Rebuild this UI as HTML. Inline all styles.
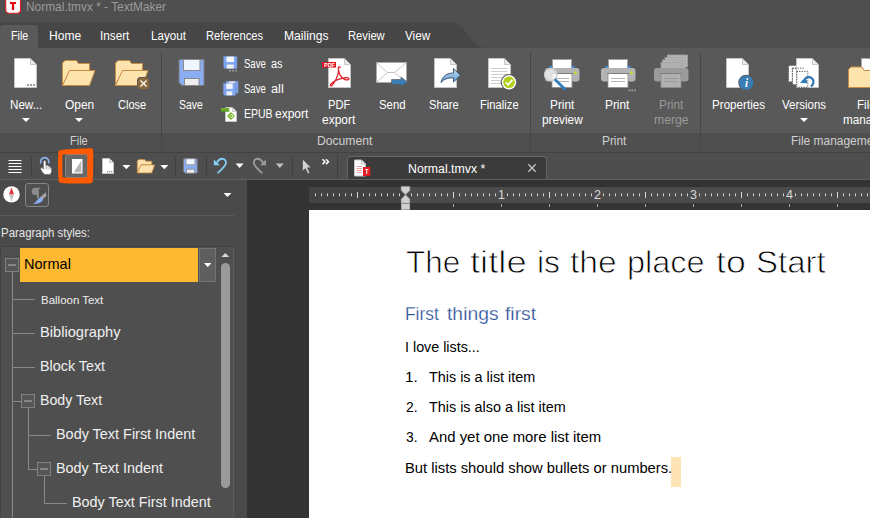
<!DOCTYPE html>
<html><head><meta charset="utf-8"><title>Normal.tmvx * - TextMaker</title>
<style>
html,body{margin:0;padding:0}
body{width:870px;height:518px;overflow:hidden;position:relative;background:#4a4a4a;font-family:'Liberation Sans', sans-serif;}
span{-webkit-font-smoothing:antialiased}
</style></head><body>
<div style="position:absolute;left:0px;top:0px;width:870px;height:22px;background:#4f4f4f;"></div>
<div style="position:absolute;left:0px;top:22px;width:870px;height:26px;background:#4f4f4f;"></div>
<svg style="position:absolute;left:0px;top:22px;" width="500" height="26" viewBox="0 0 500 26"><path d="M0 0 H450 C468 0 468 26 488 26 H0 Z" fill="#464646"/></svg>
<div style="position:absolute;left:0px;top:25px;width:38px;height:23px;background:#595959;border-radius:3px 3px 0 0;"></div>
<div style="position:absolute;left:0px;top:48px;width:870px;height:85px;background:#595959;"></div>
<div style="position:absolute;left:0px;top:133px;width:870px;height:19px;background:#4f4f4f;"></div>
<div style="position:absolute;left:0px;top:152px;width:870px;height:1px;background:#424242;"></div>
<div style="position:absolute;left:0px;top:153px;width:870px;height:26px;background:#4e4e4e;"></div>
<div style="position:absolute;left:0px;top:179px;width:870px;height:1px;background:#5e5e5e;"></div>
<div style="position:absolute;left:0px;top:180px;width:247px;height:338px;background:#4a4a4a;"></div>
<div style="position:absolute;left:247px;top:180px;width:623px;height:338px;background:#333333;"></div>
<div style="position:absolute;left:161px;top:52px;width:1px;height:100px;background:#474747;"></div>
<div style="position:absolute;left:530px;top:52px;width:1px;height:100px;background:#474747;"></div>
<div style="position:absolute;left:700px;top:52px;width:1px;height:100px;background:#474747;"></div>
<svg style="position:absolute;left:5px;top:0px;" width="17" height="15" viewBox="0 0 17 15"><rect x="0.7" y="-3" width="14.8" height="16.3" rx="3" fill="#fff" stroke="#e01b24" stroke-width="1.1"/><path d="M4.9 2.1h6.2v1.9h-1.95v5.9h-2.3v-5.9h-1.95z" fill="#e60012"/></svg>
<svg style="position:absolute;left:21.5px;top:118.2px;" width="8" height="4" viewBox="0 0 8 4"><path d="M0 0H8L4.0 4Z" fill="#fff"/></svg>
<svg style="position:absolute;left:74.5px;top:118.2px;" width="8" height="4" viewBox="0 0 8 4"><path d="M0 0H8L4.0 4Z" fill="#fff"/></svg>
<svg style="position:absolute;left:800.0px;top:118.2px;" width="8" height="4" viewBox="0 0 8 4"><path d="M0 0H8L4.0 4Z" fill="#fff"/></svg>
<div style="position:absolute;left:347px;top:156px;width:200px;height:23px;background:#666666;border-radius:4px 4px 0 0;"></div>
<div style="position:absolute;left:348px;top:157px;width:198px;height:22px;background:#3b3b3b;border-radius:3px 3px 0 0;"></div>
<div style="position:absolute;left:0px;top:179px;width:870px;height:1px;background:#5e5e5e;"></div>
<svg style="position:absolute;left:527px;top:163px;" width="10" height="10" viewBox="0 0 10 10"><path d="M1.3 1.3L8.7 8.7M8.7 1.3L1.3 8.7" stroke="#c4c4c4" stroke-width="1.3" fill="none"/></svg>
<div style="position:absolute;left:309px;top:187px;width:561px;height:16px;background:#424242;"></div>
<div style="position:absolute;left:405px;top:187px;width:465px;height:16px;background:#4b4b4b;"></div>
<svg style="position:absolute;left:309px;top:187px;" width="561" height="23" viewBox="0 0 561 23"><rect x="6.0" y="6.4" width="1" height="2.8" fill="#d0d0d0"/><rect x="12.0" y="6.4" width="1" height="2.8" fill="#d0d0d0"/><rect x="18.0" y="6.4" width="1" height="2.8" fill="#d0d0d0"/><rect x="24.0" y="6.4" width="1" height="2.8" fill="#d0d0d0"/><rect x="30.0" y="6.4" width="1" height="2.8" fill="#d0d0d0"/><rect x="36.0" y="6.4" width="1" height="2.8" fill="#d0d0d0"/><rect x="42.0" y="6.4" width="1" height="2.8" fill="#d0d0d0"/><rect x="48.0" y="5" width="1" height="6" fill="#d4d4d4"/><rect x="54.0" y="6.4" width="1" height="2.8" fill="#d0d0d0"/><rect x="60.0" y="6.4" width="1" height="2.8" fill="#d0d0d0"/><rect x="66.0" y="6.4" width="1" height="2.8" fill="#d0d0d0"/><rect x="72.0" y="6.4" width="1" height="2.8" fill="#d0d0d0"/><rect x="78.0" y="6.4" width="1" height="2.8" fill="#d0d0d0"/><rect x="84.0" y="6.4" width="1" height="2.8" fill="#d0d0d0"/><rect x="90.0" y="6.4" width="1" height="2.8" fill="#d0d0d0"/><rect x="102.0" y="6.4" width="1" height="2.8" fill="#d0d0d0"/><rect x="108.0" y="6.4" width="1" height="2.8" fill="#d0d0d0"/><rect x="114.0" y="6.4" width="1" height="2.8" fill="#d0d0d0"/><rect x="120.0" y="6.4" width="1" height="2.8" fill="#d0d0d0"/><rect x="126.0" y="6.4" width="1" height="2.8" fill="#d0d0d0"/><rect x="132.0" y="6.4" width="1" height="2.8" fill="#d0d0d0"/><rect x="138.0" y="6.4" width="1" height="2.8" fill="#d0d0d0"/><rect x="144.0" y="5" width="1" height="6" fill="#d4d4d4"/><rect x="150.0" y="6.4" width="1" height="2.8" fill="#d0d0d0"/><rect x="156.0" y="6.4" width="1" height="2.8" fill="#d0d0d0"/><rect x="162.0" y="6.4" width="1" height="2.8" fill="#d0d0d0"/><rect x="168.0" y="6.4" width="1" height="2.8" fill="#d0d0d0"/><rect x="174.0" y="6.4" width="1" height="2.8" fill="#d0d0d0"/><rect x="180.0" y="6.4" width="1" height="2.8" fill="#d0d0d0"/><rect x="186.0" y="6.4" width="1" height="2.8" fill="#d0d0d0"/><rect x="198.0" y="6.4" width="1" height="2.8" fill="#d0d0d0"/><rect x="204.0" y="6.4" width="1" height="2.8" fill="#d0d0d0"/><rect x="210.0" y="6.4" width="1" height="2.8" fill="#d0d0d0"/><rect x="216.0" y="6.4" width="1" height="2.8" fill="#d0d0d0"/><rect x="222.0" y="6.4" width="1" height="2.8" fill="#d0d0d0"/><rect x="228.0" y="6.4" width="1" height="2.8" fill="#d0d0d0"/><rect x="234.0" y="6.4" width="1" height="2.8" fill="#d0d0d0"/><rect x="240.0" y="5" width="1" height="6" fill="#d4d4d4"/><rect x="246.0" y="6.4" width="1" height="2.8" fill="#d0d0d0"/><rect x="252.0" y="6.4" width="1" height="2.8" fill="#d0d0d0"/><rect x="258.0" y="6.4" width="1" height="2.8" fill="#d0d0d0"/><rect x="264.0" y="6.4" width="1" height="2.8" fill="#d0d0d0"/><rect x="270.0" y="6.4" width="1" height="2.8" fill="#d0d0d0"/><rect x="276.0" y="6.4" width="1" height="2.8" fill="#d0d0d0"/><rect x="282.0" y="6.4" width="1" height="2.8" fill="#d0d0d0"/><rect x="294.0" y="6.4" width="1" height="2.8" fill="#d0d0d0"/><rect x="300.0" y="6.4" width="1" height="2.8" fill="#d0d0d0"/><rect x="306.0" y="6.4" width="1" height="2.8" fill="#d0d0d0"/><rect x="312.0" y="6.4" width="1" height="2.8" fill="#d0d0d0"/><rect x="318.0" y="6.4" width="1" height="2.8" fill="#d0d0d0"/><rect x="324.0" y="6.4" width="1" height="2.8" fill="#d0d0d0"/><rect x="330.0" y="6.4" width="1" height="2.8" fill="#d0d0d0"/><rect x="336.0" y="5" width="1" height="6" fill="#d4d4d4"/><rect x="342.0" y="6.4" width="1" height="2.8" fill="#d0d0d0"/><rect x="348.0" y="6.4" width="1" height="2.8" fill="#d0d0d0"/><rect x="354.0" y="6.4" width="1" height="2.8" fill="#d0d0d0"/><rect x="360.0" y="6.4" width="1" height="2.8" fill="#d0d0d0"/><rect x="366.0" y="6.4" width="1" height="2.8" fill="#d0d0d0"/><rect x="372.0" y="6.4" width="1" height="2.8" fill="#d0d0d0"/><rect x="378.0" y="6.4" width="1" height="2.8" fill="#d0d0d0"/><rect x="390.0" y="6.4" width="1" height="2.8" fill="#d0d0d0"/><rect x="396.0" y="6.4" width="1" height="2.8" fill="#d0d0d0"/><rect x="402.0" y="6.4" width="1" height="2.8" fill="#d0d0d0"/><rect x="408.0" y="6.4" width="1" height="2.8" fill="#d0d0d0"/><rect x="414.0" y="6.4" width="1" height="2.8" fill="#d0d0d0"/><rect x="420.0" y="6.4" width="1" height="2.8" fill="#d0d0d0"/><rect x="426.0" y="6.4" width="1" height="2.8" fill="#d0d0d0"/><rect x="432.0" y="5" width="1" height="6" fill="#d4d4d4"/><rect x="438.0" y="6.4" width="1" height="2.8" fill="#d0d0d0"/><rect x="444.0" y="6.4" width="1" height="2.8" fill="#d0d0d0"/><rect x="450.0" y="6.4" width="1" height="2.8" fill="#d0d0d0"/><rect x="456.0" y="6.4" width="1" height="2.8" fill="#d0d0d0"/><rect x="462.0" y="6.4" width="1" height="2.8" fill="#d0d0d0"/><rect x="468.0" y="6.4" width="1" height="2.8" fill="#d0d0d0"/><rect x="474.0" y="6.4" width="1" height="2.8" fill="#d0d0d0"/><rect x="486.0" y="6.4" width="1" height="2.8" fill="#d0d0d0"/><rect x="492.0" y="6.4" width="1" height="2.8" fill="#d0d0d0"/><rect x="498.0" y="6.4" width="1" height="2.8" fill="#d0d0d0"/><rect x="504.0" y="6.4" width="1" height="2.8" fill="#d0d0d0"/><rect x="510.0" y="6.4" width="1" height="2.8" fill="#d0d0d0"/><rect x="516.0" y="6.4" width="1" height="2.8" fill="#d0d0d0"/><rect x="522.0" y="6.4" width="1" height="2.8" fill="#d0d0d0"/><rect x="528.0" y="5" width="1" height="6" fill="#d4d4d4"/><rect x="534.0" y="6.4" width="1" height="2.8" fill="#d0d0d0"/><rect x="540.0" y="6.4" width="1" height="2.8" fill="#d0d0d0"/><rect x="546.0" y="6.4" width="1" height="2.8" fill="#d0d0d0"/><rect x="552.0" y="6.4" width="1" height="2.8" fill="#d0d0d0"/><rect x="558.0" y="6.4" width="1" height="2.8" fill="#d0d0d0"/><rect x="564.0" y="6.4" width="1" height="2.8" fill="#d0d0d0"/><rect x="570.0" y="6.4" width="1" height="2.8" fill="#d0d0d0"/><rect x="96.0" y="17" width="1" height="3" fill="#a8a8a8"/><rect x="144.0" y="17" width="1" height="3" fill="#a8a8a8"/><rect x="192.0" y="17" width="1" height="3" fill="#a8a8a8"/><rect x="240.0" y="17" width="1" height="3" fill="#a8a8a8"/><rect x="288.0" y="17" width="1" height="3" fill="#a8a8a8"/><rect x="336.0" y="17" width="1" height="3" fill="#a8a8a8"/><rect x="384.0" y="17" width="1" height="3" fill="#a8a8a8"/><rect x="432.0" y="17" width="1" height="3" fill="#a8a8a8"/><rect x="480.0" y="17" width="1" height="3" fill="#a8a8a8"/><rect x="528.0" y="17" width="1" height="3" fill="#a8a8a8"/></svg>
<svg style="position:absolute;left:0px;top:0px;" width="870" height="518" viewBox="0 0 870 518"><g fill="#d0d0d0" stroke="#a2a2a2" stroke-width="0.5"><path d="M401.2 186.4H409.8V190.5L405.5 194.8L401.2 190.5Z"/><path d="M405.5 194.8L409.8 199.2V203H401.2V199.2Z"/><rect x="401.2" y="203.7" width="8.6" height="6"/></g></svg>
<div style="position:absolute;left:309px;top:210px;width:561px;height:308px;background:#ffffff;"></div>
<div style="position:absolute;left:671px;top:457px;width:10px;height:29.5px;background:#fee3b4;"></div>
<div style="position:absolute;left:0px;top:215px;width:234px;height:1px;background:#5a5a5a;"></div>
<div style="position:absolute;left:0px;top:246px;width:234px;height:272px;background:#434343;"></div>
<div style="position:absolute;left:1px;top:247px;width:232px;height:271px;background:#4f4f4f;"></div>
<div style="position:absolute;left:233px;top:247px;width:1px;height:271px;background:#5c5c5c;"></div>
<div style="position:absolute;left:20px;top:248px;width:178px;height:34px;background:#fdb932;"></div>
<div style="position:absolute;left:199px;top:248px;width:17px;height:34px;background:#747474;"></div>
<div style="position:absolute;left:200px;top:249px;width:15px;height:32px;background:#5e5e5e;"></div>
<svg style="position:absolute;left:203.7px;top:262.95px;" width="7.6" height="4.1" viewBox="0 0 7.6 4.1"><path d="M0 0H7.6L3.8 4.1Z" fill="#fff"/></svg>
<svg style="position:absolute;left:221.2px;top:252.5px;" width="8.7" height="4.5" viewBox="0 0 8.7 4.5"><path d="M0 4.5L4.35 0L8.7 4.5Z" fill="#d8d8d8"/></svg>
<div style="position:absolute;left:221px;top:263px;width:9px;height:224.5px;background:#9a9a9a;border-radius:4.5px;"></div>
<div style="position:absolute;left:12px;top:272px;width:1px;height:246px;background:#8a8a8a;"></div>
<div style="position:absolute;left:12px;top:299px;width:23px;height:1px;background:#8a8a8a;"></div>
<div style="position:absolute;left:12px;top:333px;width:23px;height:1px;background:#8a8a8a;"></div>
<div style="position:absolute;left:12px;top:367px;width:23px;height:1px;background:#8a8a8a;"></div>
<div style="position:absolute;left:12px;top:401px;width:9px;height:1px;background:#8a8a8a;"></div>
<div style="position:absolute;left:28px;top:408px;width:1px;height:62px;background:#8a8a8a;"></div>
<div style="position:absolute;left:28px;top:435px;width:23px;height:1px;background:#8a8a8a;"></div>
<div style="position:absolute;left:28px;top:469px;width:9px;height:1px;background:#8a8a8a;"></div>
<div style="position:absolute;left:44px;top:476px;width:1px;height:28px;background:#8a8a8a;"></div>
<div style="position:absolute;left:44px;top:503px;width:23px;height:1px;background:#8a8a8a;"></div>
<div style="position:absolute;left:5px;top:258px;width:14px;height:14px;background:#808080;"></div>
<div style="position:absolute;left:6px;top:259px;width:12px;height:12px;background:#565656;"></div>
<div style="position:absolute;left:8px;top:263.5px;width:8px;height:2.5px;background:#858585;"></div>
<div style="position:absolute;left:21px;top:394px;width:14px;height:14px;background:#808080;"></div>
<div style="position:absolute;left:22px;top:395px;width:12px;height:12px;background:#565656;"></div>
<div style="position:absolute;left:24px;top:399.5px;width:8px;height:2.5px;background:#858585;"></div>
<div style="position:absolute;left:37px;top:462px;width:14px;height:14px;background:#808080;"></div>
<div style="position:absolute;left:38px;top:463px;width:12px;height:12px;background:#565656;"></div>
<div style="position:absolute;left:40px;top:467.5px;width:8px;height:2.5px;background:#858585;"></div>
<svg style="position:absolute;left:0;top:0" width="870" height="518" viewBox="0 0 870 518"><path d="M14.5 58.5H30.5L36.5 64.5V87.5H14.5Z" fill="#fff" stroke="#c4c4c4" stroke-width="1"/><path d="M30.5 58.5V64.5H36.5Z" fill="#ececec" stroke="#b4b4b4" stroke-width="0.7"/><g fill="#9a9a9a"><rect x="27" y="84" width="2" height="2"/><rect x="30" y="84" width="2" height="2"/><rect x="33" y="84" width="2" height="2"/></g><g transform="translate(62,60) scale(1.0)"><path d="M0.5 25.5V3L3 0.5H14.5L16.5 3.5H27.5V10.5H8Z" fill="#fde3ae" stroke="#c78b42" stroke-width="1.00" stroke-linejoin="round"/><path d="M0.5 25.5L7.5 10.5H33L27.5 25.5Z" fill="#fde3ae" stroke="#c78b42" stroke-width="1.00" stroke-linejoin="round"/></g><g transform="translate(115,60) scale(1.0)"><path d="M0.5 25.5V3L3 0.5H14.5L16.5 3.5H27.5V10.5H8Z" fill="#fde3ae" stroke="#c78b42" stroke-width="1.00" stroke-linejoin="round"/><path d="M0.5 25.5L7.5 10.5H33L27.5 25.5Z" fill="#fde3ae" stroke="#c78b42" stroke-width="1.00" stroke-linejoin="round"/></g><rect x="137.5" y="77.5" width="12" height="12" rx="2.5" fill="#8d6a3b" stroke="#595959" stroke-width="1"/><path d="M140.5 80.5L146.5 86.5M146.5 80.5L140.5 86.5" stroke="#fff" stroke-width="1.3" fill="none"/><g transform="translate(178.5,59) scale(1.0)"><path d="M0.5 0.5H25.5V26.5H3.5L0.5 23.5Z" fill="#8aadf4" stroke="#7a7a7a" stroke-width="1.00"/><rect x="5" y="0.5" width="16.5" height="11" fill="#f0f5ff" stroke="#8a8a8a" stroke-width="1.00"/><rect x="6" y="19.5" width="14.5" height="7" fill="#efefef" stroke="#8a8a8a" stroke-width="1.00"/></g><g transform="translate(223.5,56.3)"><path d="M0 0H13.5V12.5H1.6L0 10.9Z" fill="#7fa6f3" stroke="#6f7f9f" stroke-width="0.5"/><rect x="3" y="0.3" width="7.5" height="5.38" fill="#f4f7ff"/><rect x="3.4" y="8.25" width="6.7" height="3.95" fill="#f0f0f0"/></g><g fill="#9a9a9a"><rect x="229" y="70" width="2" height="1.5"/><rect x="232" y="70" width="2" height="1.5"/><rect x="235" y="70" width="2" height="1.5"/></g><g transform="translate(225.7,81.2)"><path d="M0 0H12.5V12H1.6L0 10.4Z" fill="#7fa6f3" stroke="#6f7f9f" stroke-width="0.5"/><rect x="3" y="0.3" width="6.5" height="5.16" fill="#f4f7ff"/><rect x="3.4" y="7.92" width="5.7" height="3.78" fill="#f0f0f0"/></g><g transform="translate(223.2,83.3)"><path d="M0 0H12.5V12.3H1.6L0 10.700000000000001Z" fill="#7fa6f3" stroke="#6f7f9f" stroke-width="0.5"/><rect x="3" y="0.3" width="6.5" height="5.29" fill="#f4f7ff"/><rect x="3.4" y="8.12" width="5.7" height="3.88" fill="#f0f0f0"/></g><path d="M225.5 107.5H232.5L236.5 111.5V121.5H225.5Z" fill="#fff" stroke="#c4c4c4" stroke-width="1"/><path d="M232.5 107.5V111.5H236.5Z" fill="#ececec" stroke="#b4b4b4" stroke-width="0.7"/><rect x="221" y="108" width="8.3" height="3.5" fill="#6fae2e"/><rect x="221" y="110.7" width="8.3" height="0.8" fill="#4f8d1f"/><path d="M231 112L235 116L231 120L227 116Z" fill="#7cb62f"/><path d="M229.5 116.5L231.5 114.5L233 116L231 118" stroke="#fff" stroke-width="0.9" fill="none"/><path d="M328.5 58.5H344.5L350.5 64.5V87.5H328.5Z" fill="#fff" stroke="#c4c4c4" stroke-width="1"/><path d="M344.5 58.5V64.5H350.5Z" fill="#ececec" stroke="#b4b4b4" stroke-width="0.7"/><rect x="322" y="62" width="14" height="5.5" fill="#e0111b"/><path transform="translate(0,1.3)" d="M340.3 66.4C339.6 64.9 337.8 65.4 338.3 67.6C339 70.6 338 73.6 336.5 76.9C335 80.1 333 83.1 331.8 84.3C330.6 85.3 329.8 84.1 330.8 82.9C332.5 80.9 337 78.4 341 77.3C344.5 76.3 348.2 76.1 348.9 77.3C349.5 78.6 346.5 79.1 344.5 78.1C341.5 76.6 339 72.6 338.5 68.6" fill="none" stroke="#e1202a" stroke-width="1.25" stroke-linejoin="round" stroke-linecap="round"/><rect x="376.5" y="62.5" width="30" height="20" fill="#fff" stroke="#a9a9a9" stroke-width="1"/><path d="M377 63L387.5 72.5H394.5L406 63M387.5 72.5L377 82M394.5 72.5L406 82" stroke="#bdbdbd" stroke-width="0.9" fill="none"/><path d="M391.5 79.5H401V77L407.5 82L401 86.5V84.5H391.5Z" fill="#3b7db4" stroke="#595959" stroke-width="0.6"/><path d="M434.5 58.5H450.5L456.5 64.5V87.5H434.5Z" fill="#fff" stroke="#c4c4c4" stroke-width="1"/><path d="M450.5 58.5V64.5H456.5Z" fill="#ececec" stroke="#b4b4b4" stroke-width="0.7"/><defs><linearGradient id="sh" x1="0" y1="0" x2="0" y2="1"><stop offset="0" stop-color="#c9e0f7"/><stop offset="1" stop-color="#5d97d2"/></linearGradient></defs><path d="M441 82.5C442.5 76 447 73 453.5 73V68.5L460.5 75.3L453.5 82V78C448 77.5 444 79 441 82.5Z" fill="url(#sh)" stroke="#2e4a68" stroke-width="0.9" stroke-linejoin="round"/><path d="M488.5 58.5H504.5L510.5 64.5V87.5H488.5Z" fill="#fff" stroke="#c4c4c4" stroke-width="1"/><path d="M504.5 58.5V64.5H510.5Z" fill="#ececec" stroke="#b4b4b4" stroke-width="0.7"/><g stroke="#c9c9c9" stroke-width="0.9"><path d="M491 68.5H507.5"/><path d="M491 71.5H507.5"/><path d="M491 74.5H507.5"/><path d="M491 77.5H507.5"/><path d="M491 80.5H507.5"/><path d="M491 83.5H507.5"/></g><circle cx="509" cy="82.3" r="8.3" fill="#595959"/><circle cx="509" cy="82.3" r="7.2" fill="#fff"/><circle cx="509" cy="82.3" r="5.8" fill="#b3ce1b"/><path d="M505.8 82.3L508.2 84.8L512.5 79.8" stroke="#fff" stroke-width="1.7" fill="none"/><rect x="552.5" y="59.5" width="19" height="10" fill="#fff" stroke="#9e9e9e" stroke-width="0.8"/><rect x="549.5" y="66" width="3" height="2.5" fill="#4a90d9"/><rect x="571.5" y="66" width="3" height="2.5" fill="#4a90d9"/><rect x="545" y="68" width="34.5" height="13.5" rx="3" fill="#b3b3b3"/><rect x="552" y="73.5" width="20" height="14" fill="#ffffff" stroke="#8d8d8d" stroke-width="0.8"/><path d="M551 73.5H573" stroke="#7d7d7d" stroke-width="1"/><path d="M555 78.5H569M555 81.5H569" stroke="#b5b5b5" stroke-width="1"/><path d="M575.5 71L577.3 72.8L575.5 74.6L573.7 72.8Z" fill="#c8e21c"/><circle cx="550.7" cy="74.7" r="6.2" fill="#f4f4f4" fill-opacity="0.72" stroke="#cbcbcb" stroke-width="1.4"/><path d="M555.5 80L565 89.2" stroke="#2f7cc0" stroke-width="2.6" stroke-linecap="round"/><rect x="608.5" y="59.5" width="19" height="10" fill="#fff" stroke="#9e9e9e" stroke-width="0.8"/><rect x="605.5" y="66" width="3" height="2.5" fill="#4a90d9"/><rect x="627.5" y="66" width="3" height="2.5" fill="#4a90d9"/><rect x="601" y="68" width="34.5" height="13.5" rx="3" fill="#b3b3b3"/><rect x="608" y="73.5" width="20" height="14" fill="#ffffff" stroke="#8d8d8d" stroke-width="0.8"/><path d="M607 73.5H629" stroke="#7d7d7d" stroke-width="1"/><path d="M611 78.5H625M611 81.5H625" stroke="#b5b5b5" stroke-width="1"/><path d="M631.5 71L633.3 72.8L631.5 74.6L629.7 72.8Z" fill="#c8e21c"/><g fill="#a5a5a5"><rect x="628.5" y="89.5" width="1.7" height="1.7"/><rect x="631.3" y="89.5" width="1.7" height="1.7"/><rect x="634.1" y="89.5" width="1.7" height="1.7"/></g><rect x="667.5" y="55" width="20" height="12" fill="#b5b5b5" stroke="#a2a2a2" stroke-width="0.7"/><rect x="665" y="57.5" width="20" height="11" fill="#b5b5b5" stroke="#a2a2a2" stroke-width="0.7"/><rect x="662.5" y="60" width="20" height="10" fill="#b5b5b5" stroke="#a2a2a2" stroke-width="0.7"/><rect x="661" y="62.5" width="20" height="8" fill="#b0b0b0" stroke="#a2a2a2" stroke-width="0.7"/><rect x="654" y="68" width="34.5" height="13.5" rx="3" fill="#9b9b9b"/><rect x="661" y="73.5" width="20" height="14" fill="#b0b0b0" stroke="#8d8d8d" stroke-width="0.8"/><path d="M660 73.5H682" stroke="#7d7d7d" stroke-width="1"/><path d="M664 78.5H678M664 81.5H678" stroke="#9a9a9a" stroke-width="1"/><path d="M726.5 58.5H742.5L748.5 64.5V87.5H726.5Z" fill="#fff" stroke="#c4c4c4" stroke-width="1"/><path d="M742.5 58.5V64.5H748.5Z" fill="#ececec" stroke="#b4b4b4" stroke-width="0.7"/><circle cx="746.2" cy="82.6" r="7.9" fill="#595959"/><circle cx="746.2" cy="82.6" r="7.2" fill="#3a7cb4"/><rect x="788.6" y="65.5" width="9.5" height="16.3" fill="#fff" stroke="#595959" stroke-width="0.9" stroke-dasharray="1.4 1.1"/><rect x="792.4" y="68.2" width="11.5" height="16.6" fill="#fff" stroke="#595959" stroke-width="0.9" stroke-dasharray="1.4 1.1"/><path d="M796.5 58.5H812.5L818.5 64.5V87.5H796.5Z" fill="#fff" stroke="#c4c4c4" stroke-width="1"/><path d="M812.5 58.5V64.5H818.5Z" fill="#ececec" stroke="#b4b4b4" stroke-width="0.7"/><path d="M792.4 68.2H803.9M792.4 68.2V84.8H796.5" fill="none" stroke="#595959" stroke-width="0.9" stroke-dasharray="1.4 1.1"/><path d="M796.6 71.4H807.8V87" fill="none" stroke="#595959" stroke-width="0.9" stroke-dasharray="1.4 1.1"/><path d="M796.8 71.4V87.3H808" fill="none" stroke="#595959" stroke-width="0.9" stroke-dasharray="1.4 1.1"/><path d="M805.5 78.3A4.8 4.8 0 1 1 810.8 86.2" fill="none" stroke="#2f78b4" stroke-width="2.2"/><path d="M800 82.7L805.8 76.8L807.4 83.3Z" fill="#2f78b4"/><path d="M861.5 58.5H880V82H861.5Z" fill="#fff" stroke="#a9a9a9" stroke-width="1"/><path d="M848.5 87.5V69.5L851 67H862L864 70.5H880V87.5Z" fill="#fde3ae" stroke="#c78b42" stroke-width="1" stroke-linejoin="round"/><g fill="#fff"><rect x="8.5" y="160" width="13" height="1"/><rect x="8.5" y="163" width="13" height="1"/><rect x="8.5" y="166" width="13" height="1"/><rect x="8.5" y="169" width="13" height="1"/><rect x="8.5" y="172" width="13" height="1"/></g><rect x="31" y="157" width="1" height="18" fill="#3f3f3f"/><rect x="175" y="157" width="1" height="18" fill="#3f3f3f"/><rect x="206" y="157" width="1" height="18" fill="#3f3f3f"/><rect x="292" y="157" width="1" height="18" fill="#3f3f3f"/><rect x="337" y="153" width="1" height="26" fill="#404040"/><path d="M40.85 163.4A4.15 4.15 0 1 1 48.55 163.4" fill="none" stroke="#8db4f6" stroke-width="1.7"/><path d="M43.4 161.2Q44.6 159.6 45.9 161.2V165.6Q47.2 164.2 48 165.6V166.3Q49.3 165.2 50 166.7V167.5Q51.2 166.7 51.6 168.2V171.3Q51.3 173.4 50 174.4H44.6Q42 172.6 40.7 169.2Q40.4 167 42 167.6L43.4 169.2Z" fill="#fff" stroke="#4c4c4c" stroke-width="0.5"/><path d="M46 166V169.3M48 166.8V169.5M50 167.8V169.8" stroke="#777" stroke-width="0.6" fill="none"/><rect x="94" y="157" width="1" height="18" fill="#424242"/><rect x="65.5" y="154.5" width="22" height="23" rx="2" fill="#686868" stroke="#858585" stroke-width="1"/><rect x="72" y="159" width="10.5" height="14.5" fill="#fff"/><path d="M81.3 160.8V172.3H73.8Z" fill="#b5b5b5"/><path fill-rule="evenodd" fill="#ff5a00" d="M58.3 152.5C58.6 150 61 150 65 149.6C74 148.8 86 148.3 91.3 148.2C93.2 148.2 93.2 150 93.2 152C93.5 160 93.3 172 92.8 181C92.6 183.2 91 183.3 89 183.4C80 183.8 68 183.6 61 183C58.7 182.8 58.6 181 58.5 179C58 170 57.9 160 58.3 152.5Z M62.5 155.3C62.5 154.6 63 154.5 64 154.5C70 154.4 80 154.3 86.5 154.4C87.2 154.4 87.3 155 87.3 156C87.4 162 87.4 170 87.2 176.6C87.2 177.4 86.8 177.6 86 177.6C80 177.9 70 177.9 63.6 177.6C62.8 177.5 62.6 177.2 62.6 176.4C62.3 170 62.3 162 62.5 155.3Z"/><path d="M102.5 158.5H109.5L113.5 162.5V173.5H102.5Z" fill="#fff" stroke="#c4c4c4" stroke-width="1"/><path d="M109.5 158.5V162.5H113.5Z" fill="#ececec" stroke="#b4b4b4" stroke-width="0.7"/><g fill="#8f8f8f"><rect x="107" y="171" width="1.3" height="1.3"/><rect x="109" y="171" width="1.3" height="1.3"/><rect x="111" y="171" width="1.3" height="1.3"/></g><g transform="translate(137,159.3) scale(0.535)"><path d="M0.5 25.5V3L3 0.5H14.5L16.5 3.5H27.5V10.5H8Z" fill="#fde3ae" stroke="#c78b42" stroke-width="1.59" stroke-linejoin="round"/><path d="M0.5 25.5L7.5 10.5H33L27.5 25.5Z" fill="#fde3ae" stroke="#c78b42" stroke-width="1.59" stroke-linejoin="round"/></g><g transform="translate(183.2,158.5) scale(0.55)"><path d="M0.5 0.5H25.5V26.5H3.5L0.5 23.5Z" fill="#8aadf4" stroke="#7a7a7a" stroke-width="1.45"/><rect x="5" y="0.5" width="16.5" height="11" fill="#f0f5ff" stroke="#8a8a8a" stroke-width="1.45"/><rect x="6" y="19.5" width="14.5" height="7" fill="#efefef" stroke="#8a8a8a" stroke-width="1.45"/></g><path d="M122.4 165.1H130.4L126.4 169.29999999999998Z" fill="#fff"/><path d="M160.3 165.1H168.3L164.3 169.29999999999998Z" fill="#fff"/><path d="M235.6 163.55H243.6L239.6 168.05Z" fill="#fff"/><path d="M275.8 163.55H283.8L279.8 168.05Z" fill="#c0c0c0"/><path d="M216.8 162.8C218.5 159.5 221 158.5 223 158.8C225.5 159.2 226.6 161.8 225.4 164.6C224.5 166.5 221.5 169.5 217.6 173.2" fill="none" stroke="#86cdf5" stroke-width="1.8"/><path d="M213.8 159.6L219.8 165.3L213.8 165.3Z" fill="#86cdf5"/><path d="M 263.0 162.8 C 261.3 159.5 258.8 158.5 256.8 158.8 C 254.3 159.2 253.2 161.8 254.4 164.6 C 255.3 166.5 258.3 169.5 262.2 173.2" fill="none" stroke="#9c9c9c" stroke-width="1.8"/><path d="M 266.0 159.6 L 260.0 165.3 L 266.0 165.3 Z" fill="#9c9c9c"/><path d="M302.5 159V171.2L305.3 168.6L307.8 173.8L309.8 172.9L307.4 167.8H311.2Z" fill="#d4d4d4" stroke="#3a3a3a" stroke-width="0.5"/><path d="M322.5 159.3L325 161.7L322.5 164.1M326 159.3L328.5 161.7L326 164.1" fill="none" stroke="#fff" stroke-width="1.5"/><path d="M354.5 160H361.5L365.5 164V176H354.5Z" fill="#fff" stroke="#c4c4c4" stroke-width="1"/><path d="M361.5 160V164H365.5Z" fill="#ececec" stroke="#b4b4b4" stroke-width="0.7"/><g stroke="#f2a3a3" stroke-width="1"><path d="M356.5 166.5H362"/><path d="M356.5 168.5H362"/><path d="M356.5 170.5H362"/><path d="M356.5 172.5H362"/></g><rect x="363" y="167" width="7.3" height="9" fill="#e01b24"/><circle cx="11.5" cy="194.4" r="8.2" fill="#fff"/><path d="M11.5 187.3L14 194.6H9Z" fill="#e8323c"/><path d="M11.5 201.6L14 194.6H9Z" fill="#c4c4c4"/><rect x="25.5" y="183.5" width="23" height="23" rx="2.5" fill="#4f4f4f" stroke="#868686" stroke-width="1"/><path d="M40.2 187.8H35.3A3.6 3.6 0 0 0 35.3 195H37V198.4H38.8V189H40.2Z" fill="#8c8c8c"/><path d="M45.8 192.3L46.3 196L42.8 199.3L40.3 197.2Z" fill="#a5a5a5"/><path d="M40.6 196.8L43.3 199.5C41.8 202.3 38 204 33 204.3C36 202.5 37.5 199.2 40.6 196.8Z" fill="#8aaef5"/><path d="M223.5 193.0H231.5L227.5 197.0Z" fill="#fff"/></svg>
<span style="position:absolute;white-space:pre;left:26.08px;top:-3.50px;line-height:20px;font-size:13px;color:#9b9b9b;transform:scaleX(0.9162);transform-origin:0 0;">Normal.tmvx * - TextMaker</span>
<span style="position:absolute;white-space:pre;left:10.50px;top:25.84px;line-height:20px;font-size:12px;color:#ffffff;transform:scaleX(0.8900);transform-origin:0 0;">File</span>
<span style="position:absolute;white-space:pre;left:48.50px;top:25.84px;line-height:20px;font-size:12px;color:#ffffff;transform:scaleX(1.0051);transform-origin:0 0;">Home</span>
<span style="position:absolute;white-space:pre;left:100.02px;top:25.84px;line-height:20px;font-size:12px;color:#ffffff;transform:scaleX(0.9772);transform-origin:0 0;">Insert</span>
<span style="position:absolute;white-space:pre;left:150.50px;top:25.84px;line-height:20px;font-size:12px;color:#ffffff;transform:scaleX(0.9674);transform-origin:0 0;">Layout</span>
<span style="position:absolute;white-space:pre;left:206.00px;top:25.84px;line-height:20px;font-size:12px;color:#ffffff;transform:scaleX(0.9289);transform-origin:0 0;">References</span>
<span style="position:absolute;white-space:pre;left:283.50px;top:25.84px;line-height:20px;font-size:12px;color:#ffffff;transform:scaleX(1.0110);transform-origin:0 0;">Mailings</span>
<span style="position:absolute;white-space:pre;left:348.00px;top:25.84px;line-height:20px;font-size:12px;color:#ffffff;transform:scaleX(0.9325);transform-origin:0 0;">Review</span>
<span style="position:absolute;white-space:pre;left:404.50px;top:25.84px;line-height:20px;font-size:12px;color:#ffffff;transform:scaleX(0.9760);transform-origin:0 0;">View</span>
<span style="position:absolute;white-space:pre;left:9.50px;top:95.34px;line-height:20px;font-size:12px;color:#ffffff;transform:scaleX(0.9694);transform-origin:0 0;">New...</span>
<span style="position:absolute;white-space:pre;left:64.50px;top:95.34px;line-height:20px;font-size:12px;color:#ffffff;transform:scaleX(0.9937);transform-origin:0 0;">Open</span>
<span style="position:absolute;white-space:pre;left:117.50px;top:95.34px;line-height:20px;font-size:12px;color:#ffffff;transform:scaleX(0.9192);transform-origin:0 0;">Close</span>
<span style="position:absolute;white-space:pre;left:179.00px;top:95.34px;line-height:20px;font-size:12px;color:#ffffff;transform:scaleX(0.8671);transform-origin:0 0;">Save</span>
<span style="position:absolute;white-space:pre;left:244.00px;top:53.84px;line-height:20px;font-size:12px;color:#ffffff;transform:scaleX(0.7949);transform-origin:0 0;">Save</span>
<span style="position:absolute;white-space:pre;left:271.00px;top:53.84px;line-height:20px;font-size:12px;color:#ffffff;transform:scaleX(0.9074);transform-origin:0 0;">as</span>
<span style="position:absolute;white-space:pre;left:244.00px;top:78.84px;line-height:20px;font-size:12px;color:#ffffff;transform:scaleX(0.7949);transform-origin:0 0;">Save</span>
<span style="position:absolute;white-space:pre;left:271.00px;top:78.84px;line-height:20px;font-size:12px;color:#ffffff;transform:scaleX(1.0582);transform-origin:0 0;">all</span>
<span style="position:absolute;white-space:pre;left:243.60px;top:103.84px;line-height:20px;font-size:12px;color:#ffffff;transform:scaleX(0.8753);transform-origin:0 0;">EPUB</span>
<span style="position:absolute;white-space:pre;left:275.00px;top:103.84px;line-height:20px;font-size:12px;color:#ffffff;transform:scaleX(0.9995);transform-origin:0 0;">export</span>
<span style="position:absolute;white-space:pre;left:328.00px;top:95.34px;line-height:20px;font-size:12px;color:#ffffff;transform:scaleX(0.9294);transform-origin:0 0;">PDF</span>
<span style="position:absolute;white-space:pre;left:322.00px;top:110.34px;line-height:20px;font-size:12px;color:#ffffff;transform:scaleX(0.9995);transform-origin:0 0;">export</span>
<span style="position:absolute;white-space:pre;left:379.00px;top:95.34px;line-height:20px;font-size:12px;color:#ffffff;transform:scaleX(0.9506);transform-origin:0 0;">Send</span>
<span style="position:absolute;white-space:pre;left:429.00px;top:95.34px;line-height:20px;font-size:12px;color:#ffffff;transform:scaleX(0.9274);transform-origin:0 0;">Share</span>
<span style="position:absolute;white-space:pre;left:480.00px;top:95.34px;line-height:20px;font-size:12px;color:#ffffff;transform:scaleX(0.9358);transform-origin:0 0;">Finalize</span>
<span style="position:absolute;white-space:pre;left:550.00px;top:95.34px;line-height:20px;font-size:12px;color:#ffffff;transform:scaleX(0.9866);transform-origin:0 0;">Print</span>
<span style="position:absolute;white-space:pre;left:542.00px;top:110.34px;line-height:20px;font-size:12px;color:#ffffff;transform:scaleX(0.9836);transform-origin:0 0;">preview</span>
<span style="position:absolute;white-space:pre;left:605.00px;top:95.34px;line-height:20px;font-size:12px;color:#ffffff;transform:scaleX(0.9866);transform-origin:0 0;">Print</span>
<span style="position:absolute;white-space:pre;left:659.00px;top:95.34px;line-height:20px;font-size:12px;color:#9a9a9a;transform:scaleX(0.9866);transform-origin:0 0;">Print</span>
<span style="position:absolute;white-space:pre;left:654.00px;top:110.34px;line-height:20px;font-size:12px;color:#9a9a9a;transform:scaleX(1.0192);transform-origin:0 0;">merge</span>
<span style="position:absolute;white-space:pre;left:712.00px;top:95.34px;line-height:20px;font-size:12px;color:#ffffff;transform:scaleX(0.9691);transform-origin:0 0;">Properties</span>
<span style="position:absolute;white-space:pre;left:782.00px;top:95.34px;line-height:20px;font-size:12px;color:#ffffff;transform:scaleX(0.9560);transform-origin:0 0;">Versions</span>
<span style="position:absolute;white-space:pre;left:857.00px;top:95.34px;line-height:20px;font-size:12px;color:#ffffff;transform:scaleX(0.9663);transform-origin:0 0;">File</span>
<span style="position:absolute;white-space:pre;left:843.30px;top:110.34px;line-height:20px;font-size:12px;color:#ffffff;transform:scaleX(0.9754);transform-origin:0 0;">manager</span>
<span style="position:absolute;white-space:pre;left:69.50px;top:131.34px;line-height:20px;font-size:12px;color:#d0d0d0;transform:scaleX(0.9155);transform-origin:0 0;">File</span>
<span style="position:absolute;white-space:pre;left:317.00px;top:131.34px;line-height:20px;font-size:12px;color:#d0d0d0;transform:scaleX(1.0116);transform-origin:0 0;">Document</span>
<span style="position:absolute;white-space:pre;left:602.00px;top:131.34px;line-height:20px;font-size:12px;color:#d0d0d0;transform:scaleX(0.9866);transform-origin:0 0;">Print</span>
<span style="position:absolute;white-space:pre;left:791.00px;top:131.34px;line-height:20px;font-size:12px;color:#d0d0d0;transform:scaleX(0.9959);transform-origin:0 0;">File management</span>
<span style="position:absolute;white-space:pre;left:407.70px;top:159.14px;line-height:20px;font-size:12px;color:#fff;transform:scaleX(1.0255);transform-origin:0 0;">Normal.tmvx *</span>
<span style="position:absolute;white-space:pre;left:497.90px;top:184.97px;line-height:20px;font-size:12.5px;color:#dadada;">1</span>
<span style="position:absolute;white-space:pre;left:593.90px;top:184.97px;line-height:20px;font-size:12.5px;color:#dadada;">2</span>
<span style="position:absolute;white-space:pre;left:689.90px;top:184.97px;line-height:20px;font-size:12.5px;color:#dadada;">3</span>
<span style="position:absolute;white-space:pre;left:785.90px;top:184.97px;line-height:20px;font-size:12.5px;color:#dadada;">4</span>
<span style="position:absolute;white-space:pre;left:405.80px;top:252.39px;line-height:20px;font-size:31.5px;color:#000;transform:scaleX(0.9970);transform-origin:0 0;-webkit-text-stroke:0.85px #fff;">The</span>
<span style="position:absolute;white-space:pre;left:470.30px;top:252.39px;line-height:20px;font-size:31.5px;color:#000;transform:scaleX(1.1567);transform-origin:0 0;-webkit-text-stroke:0.85px #fff;">title</span>
<span style="position:absolute;white-space:pre;left:536.97px;top:252.39px;line-height:20px;font-size:31.5px;color:#000;transform:scaleX(1.0151);transform-origin:0 0;-webkit-text-stroke:0.85px #fff;">is</span>
<span style="position:absolute;white-space:pre;left:570.00px;top:252.39px;line-height:20px;font-size:31.5px;color:#000;transform:scaleX(1.0677);transform-origin:0 0;-webkit-text-stroke:0.85px #fff;">the</span>
<span style="position:absolute;white-space:pre;left:626.84px;top:252.39px;line-height:20px;font-size:31.5px;color:#000;transform:scaleX(1.0318);transform-origin:0 0;-webkit-text-stroke:0.85px #fff;">place</span>
<span style="position:absolute;white-space:pre;left:716.10px;top:252.39px;line-height:20px;font-size:31.5px;color:#000;transform:scaleX(1.1300);transform-origin:0 0;-webkit-text-stroke:0.85px #fff;">to</span>
<span style="position:absolute;white-space:pre;left:755.55px;top:252.39px;line-height:20px;font-size:31.5px;color:#000;transform:scaleX(1.0491);transform-origin:0 0;-webkit-text-stroke:0.85px #fff;">Start</span>
<span style="position:absolute;white-space:pre;left:405.40px;top:304.05px;line-height:20px;font-size:19.2px;color:#2b4f93;transform:scaleX(0.9035);transform-origin:0 0;-webkit-text-stroke:0.25px #fff;">First</span>
<span style="position:absolute;white-space:pre;left:447.40px;top:304.05px;line-height:20px;font-size:19.2px;color:#2b4f93;transform:scaleX(1.0078);transform-origin:0 0;-webkit-text-stroke:0.25px #fff;">things</span>
<span style="position:absolute;white-space:pre;left:504.80px;top:304.05px;line-height:20px;font-size:19.2px;color:#2b4f93;transform:scaleX(1.0071);transform-origin:0 0;-webkit-text-stroke:0.25px #fff;">first</span>
<span style="position:absolute;white-space:pre;left:404.78px;top:337.35px;line-height:20px;font-size:14px;color:#000000;transform:scaleX(1.0219);transform-origin:0 0;">I love lists...</span>
<span style="position:absolute;white-space:pre;left:404.71px;top:367.35px;line-height:20px;font-size:14px;color:#000000;transform:scaleX(1.0934);transform-origin:0 0;">1.</span>
<span style="position:absolute;white-space:pre;left:429.00px;top:367.35px;line-height:20px;font-size:14px;color:#000000;transform:scaleX(1.0272);transform-origin:0 0;">This is a list item</span>
<span style="position:absolute;white-space:pre;left:405.80px;top:397.15px;line-height:20px;font-size:14px;color:#000000;transform:scaleX(0.9920);transform-origin:0 0;">2.</span>
<span style="position:absolute;white-space:pre;left:429.00px;top:397.15px;line-height:20px;font-size:14px;color:#000000;transform:scaleX(1.0274);transform-origin:0 0;">This is also a list item</span>
<span style="position:absolute;white-space:pre;left:405.80px;top:427.35px;line-height:20px;font-size:14px;color:#000000;transform:scaleX(0.9920);transform-origin:0 0;">3.</span>
<span style="position:absolute;white-space:pre;left:429.00px;top:427.35px;line-height:20px;font-size:14px;color:#000000;transform:scaleX(1.0640);transform-origin:0 0;">And yet one more list item</span>
<span style="position:absolute;white-space:pre;left:404.75px;top:458.15px;line-height:20px;font-size:14px;color:#000000;transform:scaleX(1.0533);transform-origin:0 0;">But lists should show bullets or numbers.</span>
<span style="position:absolute;white-space:pre;left:1.00px;top:223.24px;line-height:20px;font-size:12px;color:#e6e6e6;transform:scaleX(0.9533);transform-origin:0 0;">Paragraph styles:</span>
<span style="position:absolute;white-space:pre;left:23.73px;top:253.80px;line-height:20px;font-size:15px;color:#000;transform:scaleX(0.9701);transform-origin:0 0;">Normal</span>
<span style="position:absolute;white-space:pre;left:40.50px;top:290.02px;line-height:20px;font-size:11.5px;color:#f0f0f0;transform:scaleX(0.9976);transform-origin:0 0;">Balloon Text</span>
<span style="position:absolute;white-space:pre;left:39.82px;top:321.80px;line-height:20px;font-size:15px;color:#f0f0f0;transform:scaleX(0.9750);transform-origin:0 0;">Bibliography</span>
<span style="position:absolute;white-space:pre;left:39.84px;top:355.80px;line-height:20px;font-size:15px;color:#f0f0f0;transform:scaleX(0.9562);transform-origin:0 0;">Block Text</span>
<span style="position:absolute;white-space:pre;left:39.85px;top:389.80px;line-height:20px;font-size:15px;color:#f0f0f0;transform:scaleX(0.9467);transform-origin:0 0;">Body Text</span>
<span style="position:absolute;white-space:pre;left:55.74px;top:423.80px;line-height:20px;font-size:15px;color:#f0f0f0;transform:scaleX(0.9614);transform-origin:0 0;">Body Text First Indent</span>
<span style="position:absolute;white-space:pre;left:55.74px;top:457.80px;line-height:20px;font-size:15px;color:#f0f0f0;transform:scaleX(0.9590);transform-origin:0 0;">Body Text Indent</span>
<span style="position:absolute;white-space:pre;left:72.04px;top:491.80px;line-height:20px;font-size:15px;color:#f0f0f0;transform:scaleX(0.9579);transform-origin:0 0;">Body Text First Indent</span>
<span style="position:absolute;white-space:pre;left:323.60px;top:55.12px;line-height:20px;font-size:6px;color:#fff;transform:scaleX(0.9080);transform-origin:0 0;font-weight:bold;">PDF</span>
<span style="position:absolute;white-space:pre;left:744.60px;top:72.70px;line-height:20px;font-size:13px;color:#fff;transform:scaleX(0.8500);transform-origin:0 0;font-family:'Liberation Serif',serif;font-style:italic;font-weight:bold;">i</span>
<span style="position:absolute;white-space:pre;left:364.80px;top:162.00px;line-height:20px;font-size:7.5px;color:#fff;transform:scaleX(0.7600);transform-origin:0 0;font-weight:bold;">T</span>
</body></html>
